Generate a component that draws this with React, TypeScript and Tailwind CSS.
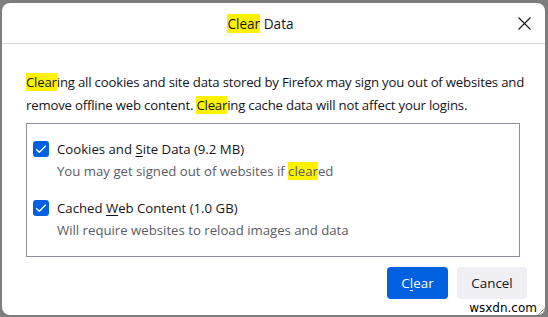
function Hl({ children }: { children: React.ReactNode }) {
  return <span className="bg-[#fff200]">{children}</span>;
}

function Check() {
  return (
    <span className="flex h-4 w-4 shrink-0 items-center justify-center rounded-[3px] bg-[#0061e0]">
      <svg viewBox="0 0 16 16" className="h-3.5 w-3.5" fill="none" stroke="white" strokeWidth="1.5">
        <path d="M2.5 8.2l3.6 3.6 7.4-7.6" />
      </svg>
    </span>
  );
}

export default function App() {
  return (
    <div className="h-[317px] w-[548px] overflow-hidden bg-[#7d7d7d] pl-[2px] pr-[3px] pt-[3px] pb-[2px] font-['Open_Sans',sans-serif] text-[#15141a]">
      <div className="relative flex h-full flex-col rounded-[8px] bg-white">
        <header className="relative flex h-[41px] shrink-0 items-center justify-center border-b border-[#d7d7db] pr-[26px] pt-[3px] text-[13.6px]">
          <span>
            <Hl>Clear</Hl> Data
          </span>
          <svg
            viewBox="0 0 13 13"
            className="absolute right-[14px] top-[14px] h-[13px] w-[13px]"
            fill="none"
            stroke="#15141a"
            strokeWidth="1.1"
          >
            <path d="M0.5 0.5l12 12M12.5 0.5l-12 12" />
          </svg>
        </header>

        <div className="shrink-0 pl-[24px] pr-[25px] pt-[27px] text-[13.2px] leading-[23px]">
          <p className="-mr-[8px] tracking-[-0.2px]">
            <Hl>Clear</Hl>ing all cookies and site data stored by Firefox may sign you out of websites and remove offline
            web content. <Hl>Clear</Hl>ing cache data will not affect your logins.
          </p>

          <div className="mt-[6px] h-[134px] border border-[#8f8f9d] px-[6px] pt-[16px]">
            <div className="flex items-start gap-[8px]">
              <div className="pt-[1px]">
                <Check />
              </div>
              <div>
                <p className="leading-[18px]">
                  Cookies and <span className="underline underline-offset-2">S</span>ite Data (9.2 MB)
                </p>
                <p className="mt-[4px] leading-[18px] text-[#5b5b66]">
                  You may get signed out of websites if <Hl>clear</Hl>ed
                </p>
              </div>
            </div>
            <div className="mt-[19px] flex items-start gap-[8px]">
              <div className="pt-[1px]">
                <Check />
              </div>
              <div>
                <p className="leading-[18px]">
                  Cached <span className="underline underline-offset-2">W</span>eb Content (1.0 GB)
                </p>
                <p className="mt-[4px] leading-[18px] text-[#5b5b66]">Will require websites to reload images and data</p>
              </div>
            </div>
          </div>
        </div>

        <div className="mt-[10px] flex shrink-0 justify-end gap-[9px] pr-[18px] text-[13.4px]">
          <button className="h-[32px] w-[61px] rounded-[4px] bg-[#0061e0] text-white">
            C<span className="underline underline-offset-2">l</span>ear
          </button>
          <button className="h-[32px] w-[70px] rounded-[4px] bg-[#f0f0f4]">Cancel</button>
        </div>

        <span className="absolute bottom-[1px] right-[8px] font-['DejaVu_Sans',sans-serif] text-[12px] leading-none text-black">
          wsxdn.com
        </span>
        <svg viewBox="0 0 10 10" className="absolute bottom-0 right-0 h-[10px] w-[10px]" stroke="#9a9a9a" strokeWidth="1">
          <path d="M3 10l7-7M6 10l4-4" />
        </svg>
      </div>
    </div>
  );
}
